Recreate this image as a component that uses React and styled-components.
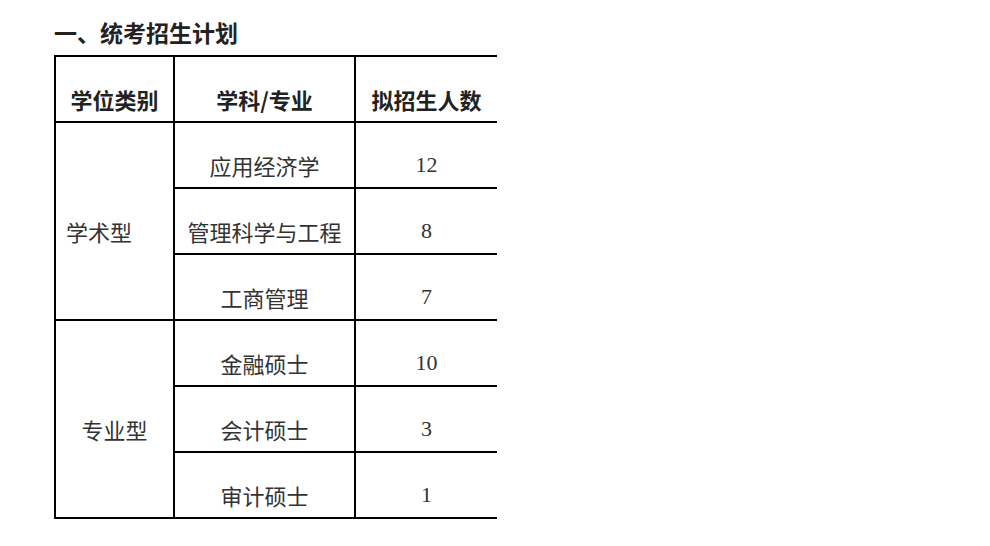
import React from 'react';
import styled, { createGlobalStyle } from 'styled-components';

const GlobalStyle = createGlobalStyle`
  html, body {
    margin: 0;
    background: #fff;
  }
`;

const Page = styled.div`
  padding: 19px 0 0 54px;
  font-family: "Liberation Serif", "Noto Sans CJK SC", serif;
  color: #333;
`;

const Title = styled.h2`
  margin: 0 0 10px 0;
  font-size: 23px;
  line-height: 26px;
  font-weight: bold;
  font-family: "Noto Sans CJK SC", sans-serif;
  color: #222;
`;

const Table = styled.table`
  border-collapse: collapse;
  width: 442px;
  table-layout: fixed;
  border-top: 2px solid #000;
  border-bottom: 2px solid #000;
`;

const Col = styled.col`
  width: ${(p) => p.w}px;
`;

const Cell = styled.td`
  height: 66px;
  padding: 19px 0 0 ${(p) => (p.align === 'left' ? '10px' : '0')};
  box-sizing: border-box;
  text-align: ${(p) => p.align || 'center'};
  vertical-align: middle;
  font-size: ${(p) => (p.num ? '22px' : '22px')};
  font-weight: ${(p) => (p.head ? 'bold' : 'normal')};
  font-family: ${(p) =>
    p.num ? '"Liberation Serif", serif' : '"Noto Sans CJK SC", sans-serif'};
  color: ${(p) => (p.head ? '#222' : '#333')};
  border-bottom: 2px solid #000;
  border-left: 2px solid #000;
  white-space: nowrap;
`;

const groups = [
  {
    type: '学术型',
    align: 'left',
    rows: [
      ['应用经济学', '12'],
      ['管理科学与工程', '8'],
      ['工商管理', '7'],
    ],
  },
  {
    type: '专业型',
    align: 'center',
    rows: [
      ['金融硕士', '10'],
      ['会计硕士', '3'],
      ['审计硕士', '1'],
    ],
  },
];

export default function App() {
  return (
    <Page>
      <GlobalStyle />
      <Title>一、统考招生计划</Title>
      <Table>
        <colgroup>
          <Col w={119} />
          <Col w={181} />
          <Col w={142} />
        </colgroup>
        <thead>
          <tr>
            <Cell as="th" head>学位类别</Cell>
            <Cell as="th" head>学科/专业</Cell>
            <Cell as="th" head>拟招生人数</Cell>
          </tr>
        </thead>
        <tbody>
          {groups.map((g) =>
            g.rows.map(([name, count], i) => (
              <tr key={name}>
                {i === 0 && (
                  <Cell rowSpan={g.rows.length} align={g.align}>
                    {g.type}
                  </Cell>
                )}
                <Cell>{name}</Cell>
                <Cell num>{count}</Cell>
              </tr>
            ))
          )}
        </tbody>
      </Table>
    </Page>
  );
}
